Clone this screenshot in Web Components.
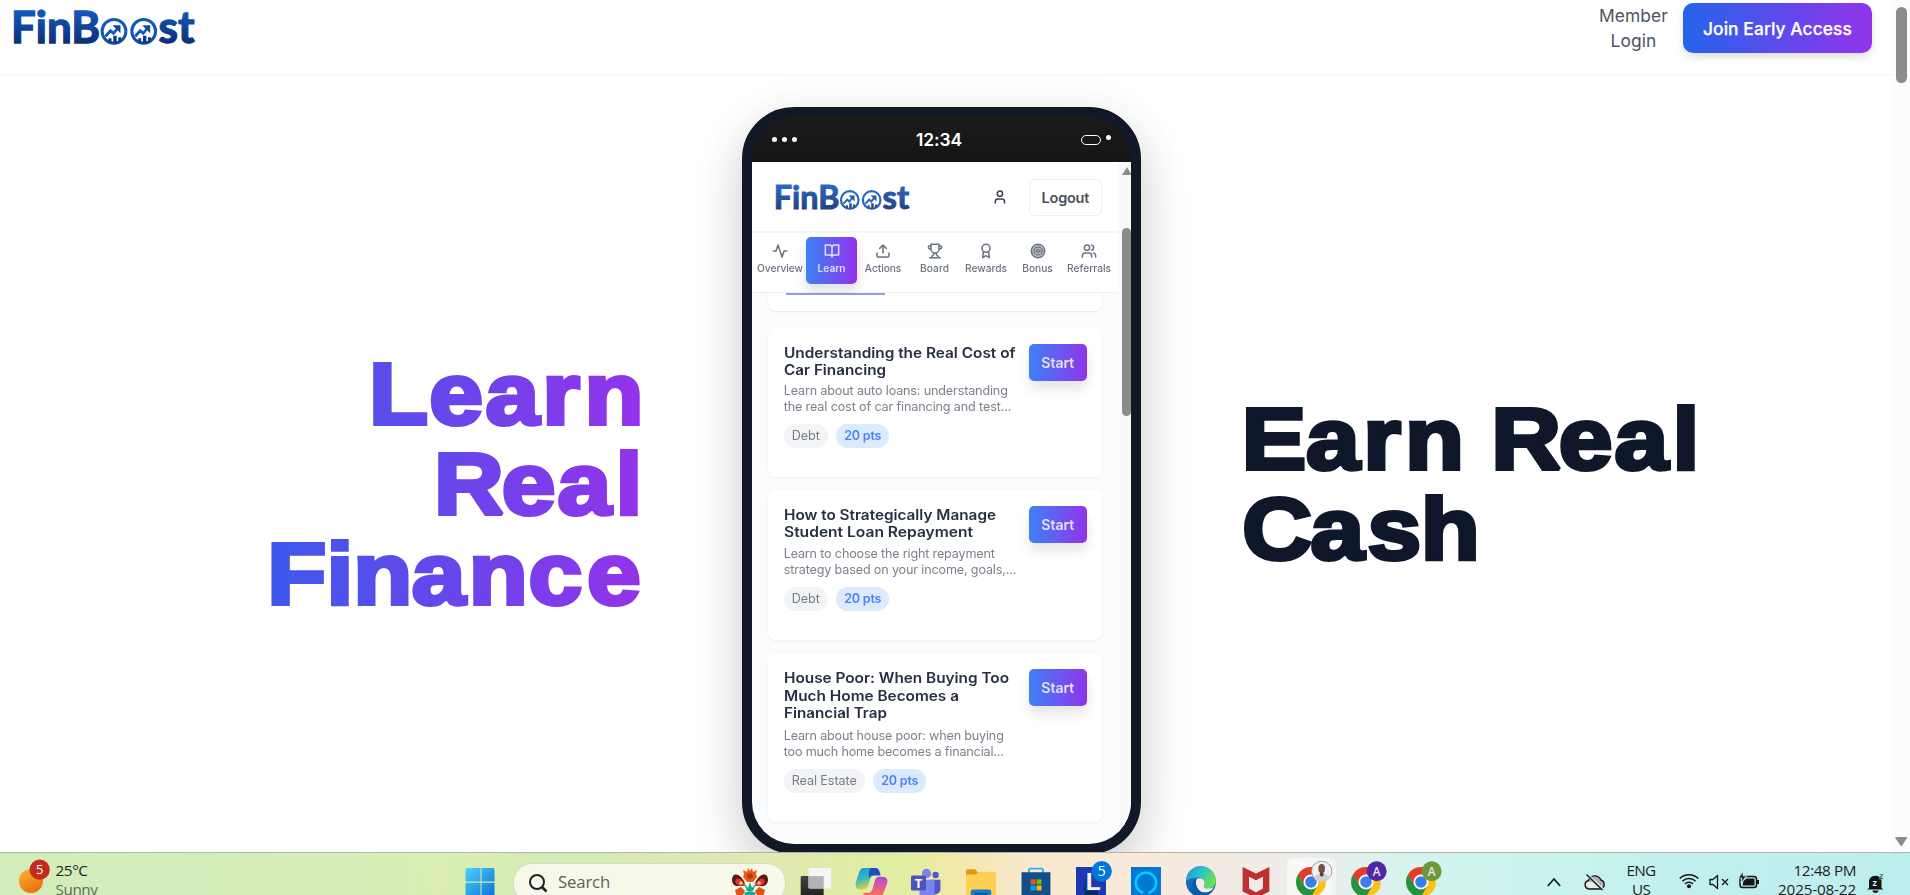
<!DOCTYPE html>
<html lang="en">
<head>
<meta charset="utf-8">
<title>FinBoost</title>
<style>
html,body{margin:0;height:100%;overflow:hidden;background:#fff}
body{font-family:Inter,"Liberation Sans",sans-serif}
</style>
</head>
<body>
<fb-desktop></fb-desktop>
<script>
const define = (name, css, html, setup) => {
  const tpl = document.createElement('template');
  customElements.define(name, class extends HTMLElement {
    constructor() {
      super();
      this.attachShadow({ mode: 'open' });
    }
    connectedCallback() {
      if (this.ready) return;
      this.ready = true;
      tpl.innerHTML = `<style>*{box-sizing:border-box}${css}</style>${typeof html === 'function' ? html(this) : html}`;
      this.shadowRoot.append(tpl.content.cloneNode(true));
      if (setup) setup(this);
    }
  });
};

/* ---------- icons ---------- */
const lucide = {
  user: '<path d="M19 21v-2a4 4 0 0 0-4-4H9a4 4 0 0 0-4 4v2"/><circle cx="12" cy="7" r="4"/>',
  activity: '<path d="M22 12h-4l-3 9L9 3l-3 9H2"/>',
  book: '<path d="M2 3h6a4 4 0 0 1 4 4v14a3 3 0 0 0-3-3H2zM22 3h-6a4 4 0 0 0-4 4v14a3 3 0 0 1 3-3h7z"/>',
  upload: '<path d="M21 15v4a2 2 0 0 1-2 2H5a2 2 0 0 1-2-2v-4M17 8l-5-5-5 5M12 3v12"/>',
  trophy: '<path d="M6 9H4.5a2.5 2.5 0 0 1 0-5H6M18 9h1.5a2.5 2.5 0 0 0 0-5H18M4 22h16M10 14.66V17c0 .55-.47.98-.97 1.21C7.85 18.75 7 20.24 7 22M14 14.66V17c0 .55.47.98.97 1.21C16.15 18.75 17 20.24 17 22M18 2H6v7a6 6 0 0 0 12 0z"/>',
  award: '<circle cx="12" cy="8" r="6"/><path d="M8.2 13 7 22l5-3 5 3-1.2-9"/>',
  target: '<circle cx="12" cy="12" r="10"/><circle cx="12" cy="12" r="6"/><circle cx="12" cy="12" r="2"/><circle cx="12" cy="12" r="4" stroke-width="1"/><circle cx="12" cy="12" r="8" stroke-width="1"/>',
  users: '<path d="M16 21v-2a4 4 0 0 0-4-4H6a4 4 0 0 0-4 4v2"/><circle cx="9" cy="7" r="4"/><path d="M22 21v-2a4 4 0 0 0-3-3.870M16 3.130a4 4 0 0 1 0 7.750"/>'
};
define('line-icon', ':host{display:block;width:16px;height:16px}svg{display:block;width:100%;height:100%}',
  el => `<svg viewBox="0 0 24 24" fill="none" stroke="currentColor" stroke-width="2.300" stroke-linecap="round" stroke-linejoin="round">${lucide[el.getAttribute('name')]}</svg>`);

const chrome = '<circle cx="14" cy="14" r="14" fill="#fbc116"/><path d="M14 0A14 14 0 0 0 1.900 7l6.100 10.500L14 7h12.100A14 14 0 0 0 14 0z" fill="#e33b2e"/><path d="M1.900 7A14 14 0 0 0 14 28l6-10.500-12 0z" fill="#229342"/><circle cx="14" cy="14" r="7" fill="#fff"/><circle cx="14" cy="14" r="5.400" fill="#3b7ded"/>';
const badge = (c, t) => `<circle cx="24" cy="4" r="9.300" fill="${c}"/><text x="24" y="8" text-anchor="middle" font-size="11" font-weight="600" fill="#e8e4f4">${t}</text>`;
const app = {
  start: '<defs><linearGradient id="g" x2="1" y2="1"><stop stop-color="#4fd0fb"/><stop offset="1" stop-color="#0873d4"/></linearGradient></defs><g fill="url(#g)"><path d="M1 1h13.500v13.500H-.5V2.500A1.500 1.500 0 0 1 1 1zM15.500 1H27a1.500 1.500 0 0 1 1.500 1.500v12h-13zM-.5 15.800h15v14h-15zM15.500 15.800h13v14h-13z"/></g>',
  view: '<defs><linearGradient id="g" x2="0" y2="1"><stop stop-color="#444"/><stop offset="1" stop-color="#1c1c1c"/></linearGradient></defs><rect x="-.3" y="8.500" width="21.500" height="22" rx="1.300" fill="url(#g)"/><rect x="7" y="1" width="21" height="19" rx="1.300" fill="#f6f6f6"/><path d="M7 8.500h14.200V20H7z" fill="#b3b3b3"/>',
  copilot: '<defs><linearGradient id="a" x2=".4" y2="1"><stop stop-color="#1b8fe0"/><stop offset=".5" stop-color="#2fb7c9"/><stop offset="1" stop-color="#f4cf2d"/></linearGradient><linearGradient id="b" x2="0" y2="1"><stop stop-color="#a44ad8"/><stop offset=".5" stop-color="#ea5a92"/><stop offset="1" stop-color="#f5813c"/></linearGradient></defs><path d="M8 1h9c3 0 4 2 5 6l-6 1c-3 1-3 6-5 10-1 2-3 3-5 3H4c-4 0-5-3-4-7l3-9c1-3 2-4 5-4z" fill="url(#a)"/><path d="M14 1h4c3 0 4 2 5 7h-8c-1 0-2 1-3 3 0-5 0-9 2-10z" fill="#1e4fc4"/><path d="M20 30h-9c-3 0-4-2-4-6h5c3 0 4-5 5-9 1-4 2-6 5-6h3c4 0 5 3 4 7l-4 10c-1 3-2 4-5 4z" fill="url(#b)"/>',
  teams: '<circle cx="14.500" cy="6" r="4.300" fill="#7b83eb"/><circle cx="23" cy="7.500" r="3" fill="#5059c9"/><path d="M19 12h8.500v9a5 5 0 0 1-8.500 3z" fill="#5059c9"/><path d="M8 12h14v11a7 7 0 0 1-14 3z" fill="#7b83eb"/><rect x="0" y="8" width="14" height="14" rx="1.500" fill="#4b53bc"/><text x="7" y="19.500" text-anchor="middle" font-size="12" font-weight="700" fill="#fff">T</text>',
  files: '<path d="M0 3.500A1.500 1.500 0 0 1 1.500 2h7L12 5.500v6H0z" fill="#dd9d0e"/><path d="M0 7h9l3-2.500h14.500A1.500 1.500 0 0 1 28 6V30H0z" fill="#fdcf53"/><path d="M4.500 30v-7a2 2 0 0 1 2-2h15a2 2 0 0 1 2 2v7z" fill="#127dcb"/><path d="M8 25h12" stroke="#0a4c93" stroke-width="1.600"/>',
  store: '<path d="M7.500 7V2.500a1 1 0 0 1 1-1h11a1 1 0 0 1 1 1V7" fill="none" stroke="#26b5f1" stroke-width="1.800"/><path d="M.5 5h27v22a3 3 0 0 1-3 3h-21a3 3 0 0 1-3-3z" fill="#124e8b"/><path d="M9 11.500h4.700v4.700H9z" fill="#f25022"/><path d="M14.500 11.500h4.700v4.700h-4.700z" fill="#7fba00"/><path d="M9 17.200h4.700v4.700H9z" fill="#00a4ef"/><path d="M14.500 17.200h4.700v4.700h-4.700z" fill="#ffb900"/>',
  letter: '<path d="M0 0h28v30H0z" fill="#1c3ab0"/><path d="M10 6 7 22h13l1 5H8z" fill="#0b2660"/><text x="9" y="21.500" font-family="Liberation Sans" font-size="23" font-weight="700" fill="#f5f5f5">L</text><circle cx="24" cy="4" r="9.500" fill="#0078d7"/><text x="24" y="8.600" text-anchor="middle" font-size="13" font-family="Open Sans" fill="#fff">5</text>',
  alexa: '<path d="M0 0h28v30H0z" fill="#0078d7"/><path d="M11.500 24A9.500 9.500 0 1 1 16.500 24" fill="none" stroke="#0bcdfd" stroke-width="2.400"/>',
  edge: '<defs><linearGradient id="a" x2="1" y2=".5"><stop stop-color="#1c8fd8"/><stop offset=".5" stop-color="#2bc0d2"/><stop offset="1" stop-color="#6be04f"/></linearGradient></defs><circle cx="14" cy="14" r="14" fill="#1269bf"/><path d="M0 13A14 14 0 0 1 28 13c0 5-4 7-8 7-3 0-4-1-3-3 2-4-2-8-7-7-5 0-9 2-10 3z" fill="url(#a)"/><path d="M10 11c5-2 9 2 7 6-1 2 0 3 3 3 2 0 4 0 6-1.500-2 5-7 6-11 5-5-2-7-8-5-12.500z" fill="#f4ebe6"/><path d="M10 11c-2 4 0 11 5 12.500 4 1 8 0 10-2A14 14 0 0 1 6 25c-3-5 0-12 4-14z" fill="#0c59a4"/>',
  shield: '<path d="M1.500 0 14 6 26.500 0v23L14 29 1.500 23z" fill="#c02f2f"/><path d="M7.500 9 14 12.500 20.500 9v11L14 23.500 7.500 20z" fill="#f1ebea"/>',
  chromeface: chrome + '<circle cx="24" cy="4" r="9.500" fill="#f1f1f1" stroke="#888" stroke-width=".7"/><path d="M16.500 10c1-2 3-3 5-3.500h5c2 .5 4 1.500 5 3.500a9 9 0 0 1-15 0z" fill="#cfd0d8"/><path d="M22.300 5h3.400v3l-1.700 1-1.700-1z" fill="#5d4032"/><ellipse cx="24" cy="1.500" rx="3.100" ry="4.300" fill="#74503f"/>',
  chromeviolet: chrome + badge('#5127a3', 'A'),
  chromegreen: chrome + badge('#6a9b36', 'A'),
  weather: '<defs><linearGradient id="g" x1=".2" x2=".7" y2="1"><stop stop-color="#f0b32e"/><stop offset="1" stop-color="#f0690e"/></linearGradient></defs><circle cx="12" cy="13" r="12" fill="url(#g)"/><circle cx="20.700" cy="1.700" r="10.100" fill="#c42b1c"/><text x="20.700" y="6.400" text-anchor="middle" font-family="Open Sans" font-size="13" fill="#fff">5</text>',
  search: '<circle cx="9" cy="9" r="7" fill="none" stroke="#222" stroke-width="2"/><path d="m14 14 4.500 4.500" stroke="#222" stroke-width="2.600"/>',
  flower: '<path d="M11 9 12 6l-1-4 4 2 1-4 2 3 2-3 1 4 4-2-1 4 1 3-4 5h-6z" fill="#e8591c"/><circle cx="18" cy="8" r="2.800" fill="#b8360f"/><path d="M14 18C11 8 4 4 1 8c-2 4-1 8 3 10zM22 18c3-10 10-14 13-10 2 4 1 8-3 10z" fill="#5f1512"/><path d="M13 18c-2-6-6-9-9-7-2 3 0 6 4 7zM23 18c2-6 6-9 9-7 2 3 0 6-4 7z" fill="#d8343c"/><circle cx="9" cy="15" r="1.800" fill="#ffc23c"/><circle cx="27" cy="15" r="1.800" fill="#ffc23c"/><path d="M12 15l6 4 6-4-3 7 4 2-7 6-7-6 4-2z" fill="#dcefdc"/><path d="m18 14 2 6 4-4-3 7h-6l-3-7 4 4zM12 25l6-2 6 2-3 5h-6z" fill="#1ba88e"/><path d="M3 22l6-3 4 4-3 6H5zM33 22l-6-3-4 4 3 6h5z" fill="#e2501b"/>',
  chevron: '<path d="M.8 9 7 2l6.200 7" fill="none" stroke="#151515" stroke-width="1.600"/>',
  cloud: '<path d="M5 16a4.300 4.300 0 0 1-.5-8.500A6.500 6.500 0 0 1 16.800 7 4.600 4.600 0 0 1 16 16z" fill="#aeb0b4" stroke="#1a1a1a" stroke-width="1.400"/><path d="M5 15h11l-8-6c-3-1-6 0-6 3z" fill="#ececec"/><path d="m3 1.500 16 15" stroke="#d6f5f3" stroke-width="3"/><path d="m2.500 1.500 16 15.500" stroke="#1a1a1a" stroke-width="1.500"/>',
  wifi: '<g fill="none" stroke="#151515" stroke-width="1.500"><path d="M.7 6.500a13.200 13.200 0 0 1 18.600 0M3.400 9.300a9.400 9.400 0 0 1 13.200 0M6 12a5.700 5.700 0 0 1 8 0"/></g><circle cx="10" cy="14.300" r="2" fill="#151515"/>',
  mute: '<path d="M1 5.500h3l4.500-4v13l-4.500-4H1z" fill="none" stroke="#151515" stroke-width="1.300" stroke-linejoin="round"/><path d="m13 5 6 6M19 5l-6 6" stroke="#151515" stroke-width="1.300"/>',
  battery: '<rect x="1" y="4.500" width="16.500" height="11" rx="2.500" fill="none" stroke="#151515" stroke-width="1.500"/><path d="M3.500 13.500 4.500 9l3-2.500h8v7z" fill="#151515"/><path d="M18 8h2v4h-2z" fill="#151515"/><path d="M4-.5-.5 6H3L2 11l5.500-7H4z" fill="#151515" stroke="#c0efef" stroke-width=".8"/>',
  bell: '<path d="M2 15V8a6.500 6.500 0 0 1 12.500-1v8l2 1.500H0zM5.500 17.500h6a3 2.300 0 0 1-6 0z" fill="#151515"/><text x="5.500" y="13" font-size="9" font-weight="700" fill="#d6f3f3">z</text><text x="12" y="6" font-size="9" font-weight="700" fill="#151515" stroke="#c0efef" stroke-width=".3">z</text>'
};
define('app-icon', ':host{display:block;flex:none;font-family:"Open Sans",sans-serif}svg{display:block;overflow:visible}',
  el => {
    const w = +(el.getAttribute('w') || 28), h = +(el.getAttribute('h') || 30), s = +(el.getAttribute('scale') || 1);
    return `<svg width="${w * s}" height="${h * s}" viewBox="0 0 ${w} ${h}">${app[el.getAttribute('name')]}</svg>`;
  });

/* ---------- brand ---------- */
const coin = x => `<g transform="translate(${x} 20.300)"><circle r="11.900" fill="#fff" stroke="url(#ink)" stroke-width="3"/><path d="M-8.500 5-3.500-.5-.5 2 4-3.500" fill="none" stroke="url(#ink)" stroke-width="2.800"/><path d="M-1.500-6H6.500V2z" fill="#1149a2"/><path d="M-5.500 10V7h3V11.500zM-.7 12V4.500h3.400V12zM4.300 11V6h3V9z" fill="#0d3a85"/></g>`;
define('brand-logo', ':host{display:block}svg{display:block;width:100%;overflow:visible}text{font-family:Lato,sans-serif;font-weight:700;font-size:44.500px;stroke:url(#ink);stroke-width:1.400px}',
  `<svg viewBox="0 0 180 35"><defs><linearGradient id="ink" gradientUnits="userSpaceOnUse" x1="0" x2="0" y1="0" y2="33"><stop stop-color="#1259bd"/><stop offset="1" stop-color="#0c2f74"/></linearGradient></defs><text x="-3" y="32.300" textLength="89" lengthAdjust="spacingAndGlyphs" fill="url(#ink)">FinB</text>${coin(100)}${coin(129.700)}<text x="144.500" y="32.300" textLength="36" lengthAdjust="spacingAndGlyphs" fill="url(#ink)">st</text></svg>`);

define('site-header', `:host{display:flex;flex:none;height:76px;padding:0 20px 0 13.500px;border-bottom:2px solid #f8f8f8;justify-content:space-between}
  brand-logo{width:180px;margin-top:11px}
  .right{display:flex;align-items:flex-start;gap:15px}
  .login{font-size:17.4px;line-height:25px;color:#4b5563;text-align:center;padding-top:2.500px}
  .join{width:189px;height:50px;margin-top:3px;border-radius:10px;background:linear-gradient(90deg,#2563eb,#9333ea);color:#fff;font-weight:500;font-size:17.4px;line-height:51px;text-align:center;box-shadow:0 4px 8px rgba(0,0,0,.13);-webkit-text-stroke:.25px #fff}`,
  `<brand-logo></brand-logo><div class="right"><div class="login"><fit-text w="69">Member</fit-text><fit-text w="46">Login</fit-text></div><div class="join"><fit-text w="149">Join Early Access</fit-text></div></div>`);

define('hero-headline', `:host{display:block;width:530px}svg{display:block;overflow:visible}
  text{font-family:"Liberation Sans",Arial,sans-serif;font-weight:700;font-size:87px;stroke-width:4px;stroke-miterlimit:2}`,
  el => JSON.parse(el.getAttribute('lines')).map(([t, x]) => {
    const ink = el.hasAttribute('gradient') ? 'url(#h)' : '#0f172a';
    return `<svg width="530" height="90" viewBox="0 0 530 90"><defs><linearGradient id="h" gradientUnits="userSpaceOnUse" x1="-68" x2="360" y1="0" y2="0"><stop stop-color="#2563eb"/><stop offset="1" stop-color="#9333ea"/></linearGradient></defs><text transform="scale(1.11 1)" y="73" x="${x}" fill="${ink}" stroke="${ink}">${t}</text></svg>`;
  }).join(''));

/* ---------- phone ---------- */
define('nav-tab', `:host{display:flex;flex:1;flex-direction:column;align-items:center;height:47px;padding-top:6px;gap:3.500px;border-radius:5px;font-size:10.2px;line-height:13px;font-weight:500;color:#6b7280}
  :host([active]){background:linear-gradient(90deg,#3b82f6,#9333ea);color:#e3dcff;font-weight:600;box-shadow:0 7px 12px rgba(0,0,0,.12)}`,
  el => `<line-icon name="${el.getAttribute('icon')}"></line-icon><fit-text w="${el.getAttribute('w')}">${el.getAttribute('label')}</fit-text>`);

define('course-card', `:host{display:flex;justify-content:space-between;align-items:flex-start;background:#fff;border-radius:8px;padding:16.500px 15.500px 0 16px;box-shadow:0 1px 3px rgba(0,0,0,.06)}
  .title{font-weight:600;font-size:13.9px;line-height:17.6px;color:#263042;padding-top:1px}
  .desc{font-size:12.6px;line-height:16.4px;color:#7b818c;margin-top:var(--gap,3px)}
  .chips{display:flex;gap:8.500px;margin-top:8px;font-size:12.6px;line-height:24.500px;text-align:center}
  .chip{width:44px;border-radius:13px;background:#f3f4f6;color:#777c86}
  .chip.long{width:81px}.chip.pts{width:53px;background:#dbeafe;color:#4a83f3;font-weight:600}
  .start{width:58px;height:37px;border-radius:5px;background:linear-gradient(90deg,#3b82f6,#9333ea);color:#e6e0ff;font-weight:600;font-size:14.2px;line-height:37px;text-align:center;box-shadow:0 8px 12px rgba(0,0,0,.1)}`,
  el => {
    const d = JSON.parse(el.getAttribute('data'));
    const rows = (a, mode) => a.map(([t, w]) => `<fit-text ${mode} w="${w}">${t}</fit-text>`).join('');
    return `<div><div class="title">${rows(d.title, 'stretch')}</div><div class="desc">${rows(d.desc, '')}</div><div class="chips"><div class="chip ${d.tag[1] > 40 ? 'long' : ''}"><fit-text w="${d.tag[1]}">${d.tag[0]}</fit-text></div><div class="chip pts"><fit-text w="37">20 pts</fit-text></div></div></div><div class="start"><fit-text w="33">Start</fit-text></div>`;
  });

const courses = [
  { h: 149.5, g: 3, title: [['Understanding the Real Cost of', 231.5], ['Car Financing', 102]], desc: [['Learn about auto loans: understanding', 224], ['the real cost of car financing and test...', 227.5]], tag: ['Debt', 28] },
  { h: 150.5, g: 4, title: [['How to Strategically Manage', 212], ['Student Loan Repayment', 189]], desc: [['Learn to choose the right repayment', 211], ['strategy based on your income, goals,...', 232.5]], tag: ['Debt', 28] },
  { h: 169, g: 5, title: [['House Poor: When Buying Too', 225], ['Much Home Becomes a', 175], ['Financial Trap', 103]], desc: [['Learn about house poor: when buying', 220], ['too much home becomes a financial...', 220]], tag: ['Real Estate', 65] }
];
define('phone-screen', `:host{display:flex;height:682px;background:#fafbfd;overflow:hidden}
  .view{flex:1;min-width:0;display:flex;flex-direction:column;filter:blur(.4px)}
  header{height:71px;flex:none;display:flex;align-items:center;padding:1px 16px 0 24px;background:#fff;border-bottom:2px solid #f4f5f7}
  header brand-logo{width:134px;margin-top:1px;opacity:.9}
  header line-icon{margin-left:83.500px;color:#374151}
  .out{margin-left:20.500px;width:74px;height:37px;border:1px solid #eceef1;border-radius:6px;text-align:center;font-size:14.500px;font-weight:600;line-height:35px;color:#4b4f58}
  nav{height:60px;flex:none;display:flex;padding:3.500px 3.200px 0 2.300px;background:#fff;border-bottom:1px solid #eff1f4}
  .list{padding:0 15.700px;display:flex;flex-direction:column;gap:12.700px}
  .prev{height:18px;background:#fff;border-radius:0 0 8px 8px;padding-left:18px;box-shadow:0 1px 2px rgba(0,0,0,.08);margin-bottom:3.500px}
  .prev i{display:block;width:99px;height:1.500px;background:#8fa0d6}
  .bar{width:13px;flex:none;background:#fafafa;display:flex;flex-direction:column;align-items:flex-end}
  .bar svg{display:block;margin-top:5px;width:9px;height:8px}
  .thumb{width:9px;height:188px;margin-top:53px;border-radius:5px;background:#8b8b8b}`,
  `<div class="view"><header><brand-logo></brand-logo><line-icon name="user"></line-icon><div class="out"><fit-text w="47.500">Logout</fit-text></div></header>
  <nav><nav-tab icon="activity" label="Overview" w="46"></nav-tab><nav-tab active icon="book" label="Learn" w="28"></nav-tab><nav-tab icon="upload" label="Actions" w="36.500"></nav-tab><nav-tab icon="trophy" label="Board" w="29"></nav-tab><nav-tab icon="award" label="Rewards" w="42"></nav-tab><nav-tab icon="target" label="Bonus" w="30.500"></nav-tab><nav-tab icon="users" label="Referrals" w="44"></nav-tab></nav>
  <div class="list"><div class="prev"><i></i></div>${courses.map(c => `<course-card style="height:${c.h}px;--gap:${c.g}px" data='${JSON.stringify(c)}'></course-card>`).join('')}</div></div>
  <div class="bar"><svg viewBox="0 0 9 8"><path d="M5 0 9.800 8H0z" fill="#8b8b8b"/></svg><div class="thumb"></div></div>`);

define('phone-mockup', `:host{display:block;width:399px;height:747px;border:10px solid #111827;border-radius:52px;background:#1a1a1a;overflow:hidden;box-shadow:0 22px 50px rgba(0,0,0,.19),0 0 60px rgba(0,0,0,.03)}
  .status{height:45px;display:flex;align-items:center;justify-content:space-between;padding:0 20px;background:linear-gradient(#1b1b1b,#151515)}
  .dots{display:flex;gap:5px;width:46px}.dots i{width:5px;height:5px;border-radius:50%;background:#fff}
  .time{color:#fff;font-weight:600;font-size:17.4px;margin-right:5px}
  .sys{width:46px;display:flex;justify-content:flex-end;gap:5px}.sys b{width:20px;height:10px;border:1.300px solid #fff;border-radius:5px}.sys i{width:5px;height:5px;border-radius:50%;background:#fff}`,
  `<div class="status"><div class="dots"><i></i><i></i><i></i></div><div class="time"><fit-text w="46">12:34</fit-text></div><div class="sys"><b></b><i></i></div></div><phone-screen></phone-screen>`);

define('page-scrollbar', `:host{display:flex;flex-direction:column;justify-content:space-between;align-items:center;width:18px;background:#fcfcfc;padding:7px 0 6px 0}
  div{width:11px;height:76px;border-radius:6px;background:#8b8b8b}svg{display:block}`,
  '<div></div><svg width="12" height="9"><path d="M1 0h10.500q1 0 .3 1.300L7.300 8.300q-1 1.200-2 0L.5 1.300Q0 0 1 0z" fill="#8b8b8b"/></svg>');

/* ---------- taskbar ---------- */
define('task-bar', `:host{display:flex;flex:none;height:43px;overflow:hidden;border-top:1px solid #aab5a6;font-family:"Open Sans","Noto Sans",sans-serif;color:#1b1f1b;background:linear-gradient(92deg,#d3ecba 0,#d6edb9 18%,#d9eeb0 23%,#d3ebb8 29%,#e2e8b2 40%,#e0eea2 47%,#f2e8a8 50%,#f7e8c8 53%,#faeadb 59%,#f2ebe7 66%,#e6efee 70%,#d2f4ee 75%,#cbf4ee 80%,#c0efee 89%,#bdeeee 100%)}
  .weather{display:flex;padding-left:19px;width:466px}
  .weather app-icon{margin-top:15px}.two{font-size:15.3px;line-height:19px;padding-top:8px}
  .weather .two{margin-left:12.500px}.dim{color:#5c6e58}
  .pill{width:273px;height:40px;margin:9.500px 0 0 18px;padding:0 17px 0 14px;border-radius:19px;background:#f6f9e9;border:1px solid #d4dcc0;display:flex;flex:none}
  .pill span{font-size:16.800px;line-height:22px;color:#5d625a;margin:7.500px 0 0 11px;flex:1}
  .pill app-icon[name=search]{margin-top:9px}.pill app-icon[name=flower]{margin-top:4px}
  .apps{display:flex;margin-left:2px}
  .apps>div{width:55px;flex:none;display:flex;justify-content:center;padding-top:14px}
  .apps>div.on{position:relative}.apps>div.on::before{content:"";position:absolute;left:4px;right:6px;top:5px;height:50px;border-radius:5px;background:rgba(255,255,255,.6);box-shadow:4px 0 0 rgba(255,255,255,.35)}
  .apps>div.on app-icon{position:relative}
  .tray{display:flex;flex:1}.tray .c{text-align:center}.tray .r{text-align:right}`,
  `<div class="weather"><app-icon name="weather" w="24" h="28"></app-icon><div class="two"><fit-text w="32">25°C</fit-text><fit-text w="42" class="dim">Sunny</fit-text></div></div>
  <app-icon name="start" w="29" style="margin-top:14px"></app-icon>
  <div class="pill"><app-icon name="search" w="19" h="20"></app-icon><span><fit-text w="52">Search</fit-text></span><app-icon name="flower" w="36" h="32"></app-icon></div>
  <div class="apps">${['view', 'copilot', 'teams', 'files', 'store', 'letter', 'alexa', 'edge', 'shield', 'chromeface', 'chromeviolet', 'chromegreen'].map(n => `<div class="${n === 'chromeface' ? 'on' : ''}"><app-icon name="${n}" scale="1.07"></app-icon></div>`).join('')}</div>
  <div class="tray"><app-icon name="chevron" w="14" h="10" style="margin:24px 0 0 98.500px"></app-icon><app-icon name="cloud" w="20" h="18" style="margin:20px 0 0 23px"></app-icon>
  <div class="two c" style="margin-left:23px;width:29px"><fit-text w="29">ENG</fit-text><fit-text w="18">US</fit-text></div>
  <app-icon name="wifi" w="20" h="17" style="margin:19px 0 0 23px"></app-icon><app-icon name="mute" w="20" h="16" style="margin:21px 0 0 10px"></app-icon><app-icon name="battery" w="20" h="17" style="margin:19px 0 0 10px"></app-icon>
  <div class="two r" style="margin-left:19.500px;width:78px"><fit-text w="62.500">12:48 PM</fit-text><fit-text w="78">2025-08-22</fit-text></div><app-icon name="bell" w="17" h="20" style="margin:20px 0 0 11px"></app-icon></div>`);

define('fb-desktop', `:host{display:flex;flex-direction:column;width:1910px;height:895px;overflow:hidden}
  .window{flex:1;min-height:0;display:flex;overflow:hidden}.page{flex:1;display:flex;flex-direction:column;min-width:0}
  main{flex:1;min-height:0;display:flex;align-items:flex-start;overflow:hidden}
  .left{width:502px;margin:275px 0 0 240px}.right{margin:320px 0 0 59px}phone-mockup{flex:none;margin-top:31px}
  .left hero-headline{width:502px}`,
  `<div class="window"><div class="page"><site-header></site-header><main>
  <div class="left"><hero-headline gradient lines='[["Learn","116.2 170.5 221.1 272.4 310.3"],["Real","174.8 235.8 286 338.4"],["Finance","24.6 78 102 154.7 206.1 260 312.6"]]'></hero-headline></div>
  <phone-mockup></phone-mockup>
  <div class="right"><hero-headline lines='[["Earn Real","37.6 95.4 147 184.8 238 262.3 323.2 373.5 425.6"],["Cash","38.1 99.6 151 198.8"]]'></hero-headline></div>
  </main></div><page-scrollbar></page-scrollbar></div><task-bar></task-bar>`);

/* Fits its text to a given width, by letter-spacing or by a horizontal stretch. */
define('fit-text', ':host{display:block;white-space:nowrap}span{display:inline-block;transform-origin:0 50%}', '<span><slot></slot></span>', el => {
  const span = el.shadowRoot.querySelector('span');
  const n = el.textContent.length;
  if (!n) return;
  const width = span.getBoundingClientRect().width;
  const goal = parseFloat(el.getAttribute('w'));
  if (el.hasAttribute('stretch')) {
    span.style.transform = `scaleX(${(goal / width).toFixed(4)})`;
    span.style.marginRight = (goal - width).toFixed(2) + 'px';
  } else {
    span.style.letterSpacing = ((goal - width) / n).toFixed(3) + 'px';
  }
});
</script>
</body>
</html>
